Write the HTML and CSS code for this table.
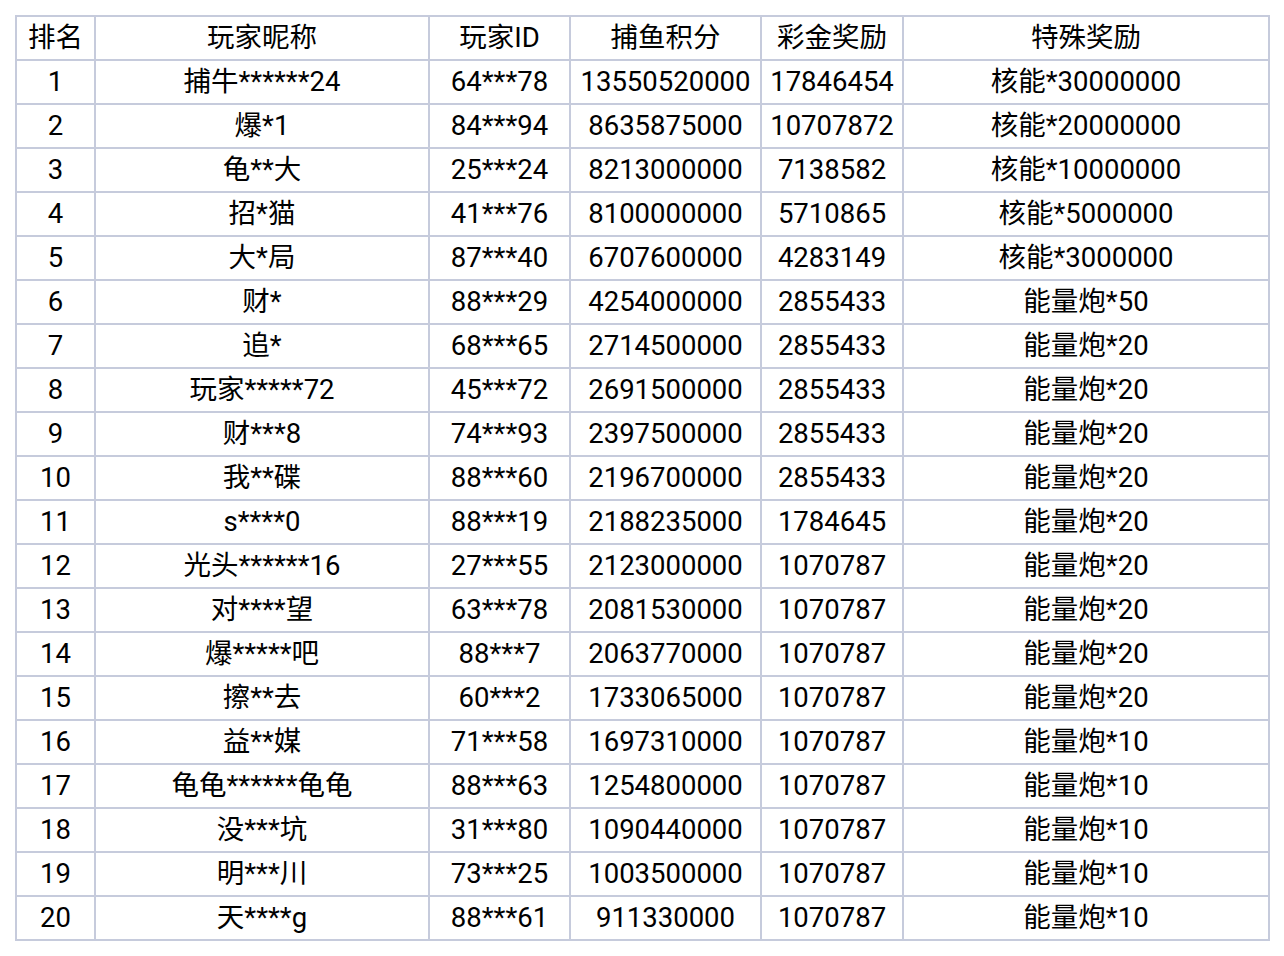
FILE: index.html
```html
<!DOCTYPE html>
<html lang="zh-CN">
<head>
<meta charset="utf-8">
<title>排名</title>
<link rel="stylesheet" href="styles.css">
</head>
<body>
<table class="rank">
<colgroup>
<col class="c1"><col class="c2"><col class="c3"><col class="c4"><col class="c5"><col class="c6">
</colgroup>
<thead>
<tr><th>排名</th><th>玩家昵称</th><th>玩家ID</th><th>捕鱼积分</th><th>彩金奖励</th><th>特殊奖励</th></tr>
</thead>
<tbody>
<tr><td>1</td><td>捕牛******24</td><td>64***78</td><td>13550520000</td><td>17846454</td><td>核能*30000000</td></tr>
<tr><td>2</td><td>爆*1</td><td>84***94</td><td>8635875000</td><td>10707872</td><td>核能*20000000</td></tr>
<tr><td>3</td><td>龟**大</td><td>25***24</td><td>8213000000</td><td>7138582</td><td>核能*10000000</td></tr>
<tr><td>4</td><td>招*猫</td><td>41***76</td><td>8100000000</td><td>5710865</td><td>核能*5000000</td></tr>
<tr><td>5</td><td>大*局</td><td>87***40</td><td>6707600000</td><td>4283149</td><td>核能*3000000</td></tr>
<tr><td>6</td><td>财*</td><td>88***29</td><td>4254000000</td><td>2855433</td><td>能量炮*50</td></tr>
<tr><td>7</td><td>追*</td><td>68***65</td><td>2714500000</td><td>2855433</td><td>能量炮*20</td></tr>
<tr><td>8</td><td>玩家*****72</td><td>45***72</td><td>2691500000</td><td>2855433</td><td>能量炮*20</td></tr>
<tr><td>9</td><td>财***8</td><td>74***93</td><td>2397500000</td><td>2855433</td><td>能量炮*20</td></tr>
<tr><td>10</td><td>我**碟</td><td>88***60</td><td>2196700000</td><td>2855433</td><td>能量炮*20</td></tr>
<tr><td>11</td><td>s****0</td><td>88***19</td><td>2188235000</td><td>1784645</td><td>能量炮*20</td></tr>
<tr><td>12</td><td>光头******16</td><td>27***55</td><td>2123000000</td><td>1070787</td><td>能量炮*20</td></tr>
<tr><td>13</td><td>对****望</td><td>63***78</td><td>2081530000</td><td>1070787</td><td>能量炮*20</td></tr>
<tr><td>14</td><td>爆*****吧</td><td>88***7</td><td>2063770000</td><td>1070787</td><td>能量炮*20</td></tr>
<tr><td>15</td><td>擦**去</td><td>60***2</td><td>1733065000</td><td>1070787</td><td>能量炮*20</td></tr>
<tr><td>16</td><td>益**媒</td><td>71***58</td><td>1697310000</td><td>1070787</td><td>能量炮*10</td></tr>
<tr><td>17</td><td>龟龟******龟龟</td><td>88***63</td><td>1254800000</td><td>1070787</td><td>能量炮*10</td></tr>
<tr><td>18</td><td>没***坑</td><td>31***80</td><td>1090440000</td><td>1070787</td><td>能量炮*10</td></tr>
<tr><td>19</td><td>明***川</td><td>73***25</td><td>1003500000</td><td>1070787</td><td>能量炮*10</td></tr>
<tr><td>20</td><td>天****g</td><td>88***61</td><td>911330000</td><td>1070787</td><td>能量炮*10</td></tr>
</tbody>
</table>
</body>
</html>
```
FILE: styles.css
```css
html, body {
  margin: 0;
  padding: 0;
  background: #ffffff;
}
body {
  padding: 15px;
}
.rank {
  border-collapse: collapse;
  table-layout: fixed;
  width: 1253px;
  font-family: Roboto, "Noto Sans CJK SC", sans-serif;
  font-size: 27.5px;
  color: #000000;
}
.rank th,
.rank td {
  border: 2px solid #c6cbdc;
  height: 42px;
  padding: 0;
  text-align: center;
  vertical-align: middle;
  font-weight: normal;
  line-height: 42px;
  white-space: nowrap;
}
.c1 { width: 79px; }
.c2 { width: 334px; }
.c3 { width: 141px; }
.c4 { width: 191px; }
.c5 { width: 142px; }
.c6 { width: 366px; }
```
